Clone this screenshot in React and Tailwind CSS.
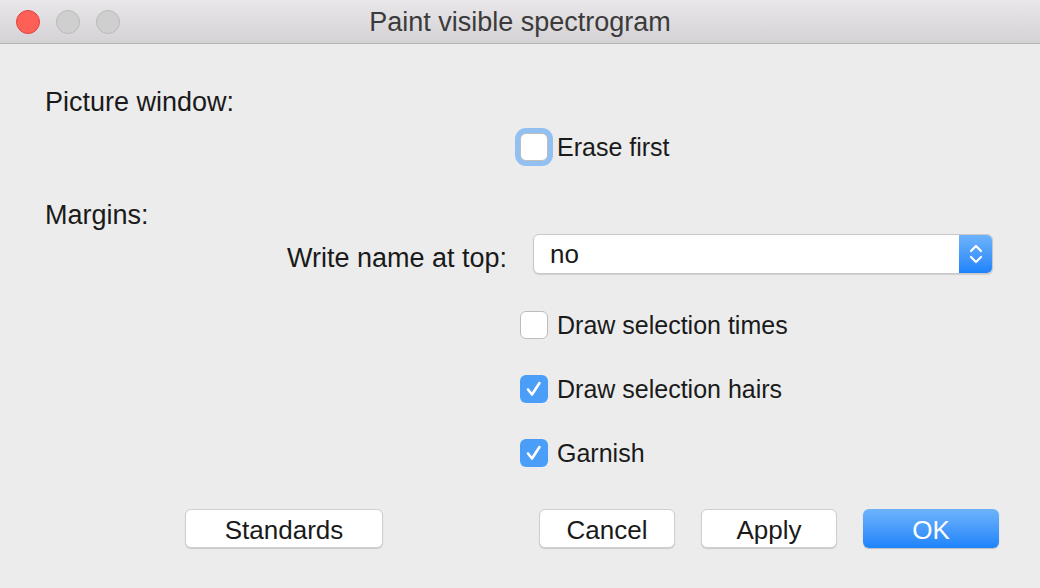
import React from "react";

const font = { fontFamily: '"Liberation Sans", Arial, sans-serif' };

function Check() {
  return (
    <svg width="22" height="22" viewBox="0 0 22 22" fill="none">
      <path d="M5 11.5 L9 16.5 L16.5 5" stroke="white" strokeWidth="2.6" strokeLinecap="round" strokeLinejoin="round" />
    </svg>
  );
}

function CheckRow({ label, checked, focused, className }) {
  return (
    <div className={"flex items-center pl-[520px] " + className}>
      <div
        className={
          "w-[28px] h-[28px] shrink-0 rounded-[6px] flex items-center justify-center " +
          (checked
            ? "bg-[#4a9ef8]"
            : "bg-white border border-[#bdbdbd]") +
          (focused ? " shadow-[0_0_0_5px_#93c0f2] border-[#7fb0e8]" : "")
        }
      >
        {checked && <Check />}
      </div>
      <span className="ml-[9px] pt-[2px] text-[25px] text-[#1a1a1a] whitespace-nowrap">{label}</span>
    </div>
  );
}

function Btn({ children, primary, className }) {
  return (
    <button
      className={
        "h-[39px] pt-[3px] rounded-[6px] text-[26px] flex items-center justify-center " +
        (primary
          ? "bg-gradient-to-b from-[#6db3fb] to-[#1b83fb] text-white shadow-[0_1px_1px_rgba(0,0,0,0.2)]"
          : "bg-white text-[#1a1a1a] border border-[#cfcfcf] shadow-[0_1px_1px_rgba(0,0,0,0.15)]") +
        " " +
        className
      }
    >
      {children}
    </button>
  );
}

export default function App() {
  return (
    <div className="w-[1040px] h-[588px] bg-[#ececec] flex flex-col overflow-hidden" style={font}>
      {/* title bar */}
      <div className="h-[44px] shrink-0 bg-gradient-to-b from-[#e9e7e9] to-[#d4d2d4] border-b border-[#b4b4b4] relative flex items-center justify-center">
        <div className="absolute left-[16px] top-[10px] flex gap-[16px]">
          <div className="w-[24px] h-[24px] rounded-full bg-[#fe5f57] border border-[#e0443e]" />
          <div className="w-[24px] h-[24px] rounded-full bg-[#d0cfd0] border border-[#bcbbbc]" />
          <div className="w-[24px] h-[24px] rounded-full bg-[#d0cfd0] border border-[#bcbbbc]" />
        </div>
        <span className="text-[27px] pt-[2px] text-[#3b3b3b]">Paint visible spectrogram</span>
      </div>

      <div className="flex flex-col">
        <div className="h-[28px] mt-[44px] pl-[45px] flex items-center text-[27px] text-[#1a1a1a]">Picture window:</div>
        <CheckRow label="Erase first" focused className="h-[40px] mt-[11px]" />
        <div className="h-[28px] mt-[34px] pl-[45px] flex items-center text-[27px] text-[#1a1a1a]">Margins:</div>
        <div className="h-[40px] mt-[5px] flex items-center">
          <div className="w-[507px] text-right text-[27px] text-[#1a1a1a] pt-[8px] whitespace-nowrap">Write name at top:</div>
          <div className="ml-[26px] w-[460px] h-[40px] rounded-[6px] bg-white border border-[#c8c8c8] shadow-[0_1px_1px_rgba(0,0,0,0.12)] flex items-center overflow-hidden">
            <span className="flex-1 pl-[16px] text-[26px] text-[#1a1a1a]">no</span>
            <div className="w-[33px] h-full bg-gradient-to-b from-[#6db3fb] to-[#1b83fb] flex items-center justify-center">
              <svg width="16" height="24" viewBox="0 0 16 24" fill="none">
                <path d="M3 9 L8 4 L13 9" stroke="white" strokeWidth="2.2" strokeLinecap="round" strokeLinejoin="round" />
                <path d="M3 15 L8 20 L13 15" stroke="white" strokeWidth="2.2" strokeLinecap="round" strokeLinejoin="round" />
              </svg>
            </div>
          </div>
        </div>
        <CheckRow label="Draw selection times" className="h-[28px] mt-[37px]" />
        <CheckRow label="Draw selection hairs" checked className="h-[28px] mt-[36px]" />
        <CheckRow label="Garnish" checked className="h-[28px] mt-[36px]" />
        <div className="mt-[42px] flex pl-[185px]">
          <Btn className="w-[198px]">Standards</Btn>
          <Btn className="w-[136px] ml-[156px]">Cancel</Btn>
          <Btn className="w-[136px] ml-[26px]">Apply</Btn>
          <Btn primary className="w-[136px] ml-[26px]">OK</Btn>
        </div>
      </div>
    </div>
  );
}
